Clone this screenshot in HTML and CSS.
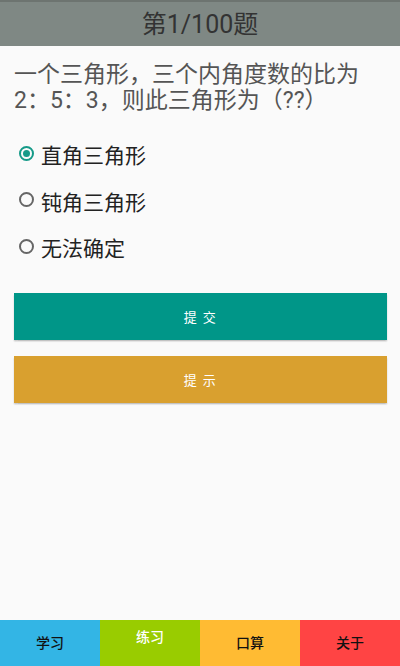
FILE: index.html
```html
<!DOCTYPE html>
<html lang="zh">
<head>
<meta charset="utf-8">
<link rel="stylesheet" href="styles.css">
</head>
<body>
<div class="app">
  <header class="topbar"><span class="title">第1/100题</span></header>
  <main class="content">
    <p class="question">一个三角形，三个内角度数的比为2：5：3，则此三角形为（??）</p>
    <div class="options">
      <label class="opt"><span class="radio checked"></span><span class="opt-text">直角三角形</span></label>
      <label class="opt"><span class="radio"></span><span class="opt-text">钝角三角形</span></label>
      <label class="opt"><span class="radio"></span><span class="opt-text">无法确定</span></label>
    </div>
    <div class="buttons">
      <div class="btn btn-submit">提 交</div>
      <div class="btn btn-hint">提 示</div>
    </div>
  </main>
  <nav class="tabs">
    <div class="tab tab-study">学习</div>
    <div class="tab tab-practice">练习</div>
    <div class="tab tab-calc">口算</div>
    <div class="tab tab-about">关于</div>
  </nav>
</div>
</body>
</html>
```
FILE: styles.css
```css
* { box-sizing: border-box; }
html, body { margin: 0; padding: 0; }
body {
  font-family: Roboto, "Noto Sans CJK SC", sans-serif;
  background: #fafafa;
}
.app {
  width: 400px;
  height: 666px;
  display: flex;
  flex-direction: column;
}
.topbar {
  height: 46px;
  background: #7f8884;
  border-top: 2px solid #6d7470;
  display: flex;
  align-items: center;
  justify-content: center;
}
.title {
  font-size: 25px;
  color: #333;
  line-height: 1;
}
.content {
  flex: 1;
  padding: 16px 13px 0 14px;
}
.question {
  margin: 0;
  font-size: 23px;
  line-height: 26px;
  color: #555;
}
.options {
  margin-top: 17px;
  display: flex;
  flex-direction: column;
}
.opt {
  height: 46.5px;
  display: flex;
  align-items: center;
  gap: 7px;
  padding-left: 5px;
}
.radio {
  width: 15px;
  height: 15px;
  border-radius: 50%;
  border: 2px solid #666;
  display: flex;
  align-items: center;
  justify-content: center;
  margin-top: -2px;
}
.radio.checked {
  border-color: #159a88;
}
.radio.checked::after {
  content: "";
  width: 7px;
  height: 7px;
  border-radius: 50%;
  background: #159a88;
}
.opt-text {
  font-size: 21px;
  color: #222;
}
.buttons {
  margin-top: 22px;
  display: flex;
  flex-direction: column;
  gap: 16px;
}
.btn {
  height: 47px;
  display: flex;
  align-items: center;
  justify-content: center;
  color: #fff;
  font-size: 13px;
  letter-spacing: 1.5px;
  white-space: pre;
  box-shadow: 0 1.5px 1.5px rgba(0,0,0,0.22);
}
.btn-submit { background: #009688; }
.btn-hint { background: #d9a02f; }
.tabs {
  height: 46px;
  display: grid;
  grid-template-columns: repeat(4, 1fr);
}
.tab {
  display: flex;
  align-items: center;
  justify-content: center;
  font-size: 14px;
  font-weight: 500;
  color: #111;
  padding-bottom: 3px;
}
.tab-study { background: #33b5e5; }
.tab-practice { background: #99cc00; color: #fff; align-items: flex-start; padding-top: 6px; padding-bottom: 0; }
.tab-calc { background: #ffbb33; }
.tab-about { background: #ff4444; }
```
